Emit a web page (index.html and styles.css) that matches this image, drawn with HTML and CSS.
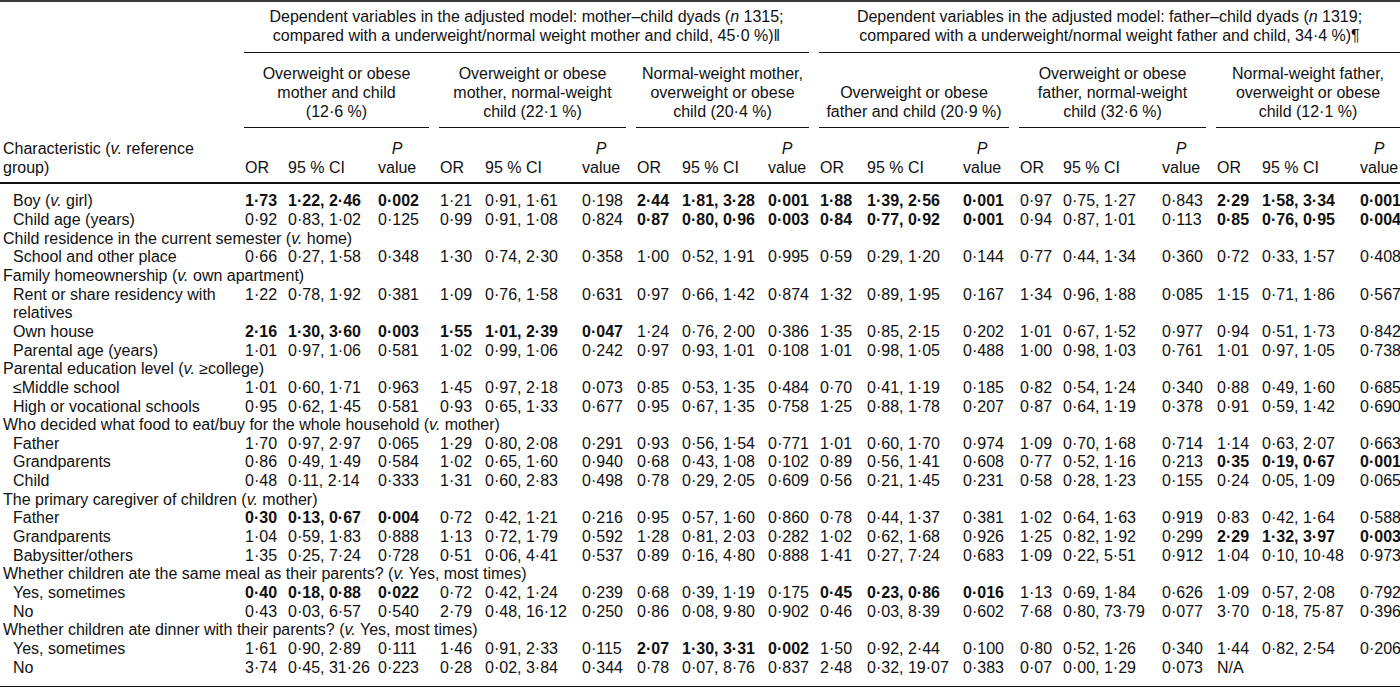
FILE: index.html
```html
<!DOCTYPE html>
<html>
<head>
<meta charset="utf-8">
<link rel="stylesheet" href="styles.css">
</head>
<body>
<table class="t">
<colgroup>
<col style="width:242px">
<col style="width:43px"><col style="width:90px"><col style="width:62px">
<col style="width:45px"><col style="width:97px"><col style="width:55px">
<col style="width:45px"><col style="width:86px"><col style="width:52px">
<col style="width:47px"><col style="width:96px"><col style="width:57px">
<col style="width:43px"><col style="width:99px"><col style="width:55px">
<col style="width:45px"><col style="width:98px"><col style="width:43px">
</colgroup>
<thead>
<tr class="h1">
<th></th>
<th colspan="9"><div class="rule">Dependent variables in the adjusted model: mother–child dyads (<i>n</i> 1315;<br>compared with a underweight/normal weight mother and child, 45·0 %)‖</div></th>
<th colspan="9"><div class="rule last">Dependent variables in the adjusted model: father–child dyads (<i>n</i> 1319;<br>compared with a underweight/normal weight father and child, 34·4 %)¶</div></th>
</tr>
<tr class="h2">
<th></th>
<th colspan="3"><div class="rule">Overweight or obese<br>mother and child<br>(12·6 %)</div></th>
<th colspan="3"><div class="rule">Overweight or obese<br>mother, normal-weight<br>child (22·1 %)</div></th>
<th colspan="3"><div class="rule">Normal-weight mother,<br>overweight or obese<br>child (20·4 %)</div></th>
<th colspan="3"><div class="rule">Overweight or obese<br>father and child (20·9 %)</div></th>
<th colspan="3"><div class="rule">Overweight or obese<br>father, normal-weight<br>child (32·6 %)</div></th>
<th colspan="3"><div class="rule last">Normal-weight father,<br>overweight or obese<br>child (12·1 %)</div></th>
</tr>
<tr class="h3">
<th class="lbl">Characteristic (<i>v.</i> reference<br>group)</th>
<th>OR</th><th>95 % CI</th><th><span class="pv"><i>P</i><br>value</span></th>
<th>OR</th><th>95 % CI</th><th><span class="pv"><i>P</i><br>value</span></th>
<th>OR</th><th>95 % CI</th><th><span class="pv"><i>P</i><br>value</span></th>
<th>OR</th><th>95 % CI</th><th><span class="pv"><i>P</i><br>value</span></th>
<th>OR</th><th>95 % CI</th><th><span class="pv"><i>P</i><br>value</span></th>
<th>OR</th><th>95 % CI</th><th><span class="pv"><i>P</i><br>value</span></th>
</tr>
</thead>
<tbody>
<tr class="sub first"><td class="lbl">Boy (<i>v.</i> girl)</td>
<td class="b">1·73</td><td class="b">1·22, 2·46</td><td class="b">0·002</td>
<td>1·21</td><td>0·91, 1·61</td><td>0·198</td>
<td class="b">2·44</td><td class="b">1·81, 3·28</td><td class="b">0·001</td>
<td class="b">1·88</td><td class="b">1·39, 2·56</td><td class="b">0·001</td>
<td>0·97</td><td>0·75, 1·27</td><td>0·843</td>
<td class="b">2·29</td><td class="b">1·58, 3·34</td><td class="b">0·001</td></tr>
<tr class="sub"><td class="lbl">Child age (years)</td>
<td>0·92</td><td>0·83, 1·02</td><td>0·125</td>
<td>0·99</td><td>0·91, 1·08</td><td>0·824</td>
<td class="b">0·87</td><td class="b">0·80, 0·96</td><td class="b">0·003</td>
<td class="b">0·84</td><td class="b">0·77, 0·92</td><td class="b">0·001</td>
<td>0·94</td><td>0·87, 1·01</td><td>0·113</td>
<td class="b">0·85</td><td class="b">0·76, 0·95</td><td class="b">0·004</td></tr>
<tr class="grp"><td colspan="19">Child residence in the current semester (<i>v.</i> home)</td></tr>
<tr class="sub"><td class="lbl">School and other place</td>
<td>0·66</td><td>0·27, 1·58</td><td>0·348</td>
<td>1·30</td><td>0·74, 2·30</td><td>0·358</td>
<td>1·00</td><td>0·52, 1·91</td><td>0·995</td>
<td>0·59</td><td>0·29, 1·20</td><td>0·144</td>
<td>0·77</td><td>0·44, 1·34</td><td>0·360</td>
<td>0·72</td><td>0·33, 1·57</td><td>0·408</td></tr>
<tr class="grp"><td colspan="19">Family homeownership (<i>v.</i> own apartment)</td></tr>
<tr class="sub"><td class="lbl">Rent or share residency with relatives</td>
<td>1·22</td><td>0·78, 1·92</td><td>0·381</td>
<td>1·09</td><td>0·76, 1·58</td><td>0·631</td>
<td>0·97</td><td>0·66, 1·42</td><td>0·874</td>
<td>1·32</td><td>0·89, 1·95</td><td>0·167</td>
<td>1·34</td><td>0·96, 1·88</td><td>0·085</td>
<td>1·15</td><td>0·71, 1·86</td><td>0·567</td></tr>
<tr class="sub"><td class="lbl">Own house</td>
<td class="b">2·16</td><td class="b">1·30, 3·60</td><td class="b">0·003</td>
<td class="b">1·55</td><td class="b">1·01, 2·39</td><td class="b">0·047</td>
<td>1·24</td><td>0·76, 2·00</td><td>0·386</td>
<td>1·35</td><td>0·85, 2·15</td><td>0·202</td>
<td>1·01</td><td>0·67, 1·52</td><td>0·977</td>
<td>0·94</td><td>0·51, 1·73</td><td>0·842</td></tr>
<tr class="sub"><td class="lbl">Parental age (years)</td>
<td>1·01</td><td>0·97, 1·06</td><td>0·581</td>
<td>1·02</td><td>0·99, 1·06</td><td>0·242</td>
<td>0·97</td><td>0·93, 1·01</td><td>0·108</td>
<td>1·01</td><td>0·98, 1·05</td><td>0·488</td>
<td>1·00</td><td>0·98, 1·03</td><td>0·761</td>
<td>1·01</td><td>0·97, 1·05</td><td>0·738</td></tr>
<tr class="grp"><td colspan="19">Parental education level (<i>v.</i> ≥college)</td></tr>
<tr class="sub"><td class="lbl">≤Middle school</td>
<td>1·01</td><td>0·60, 1·71</td><td>0·963</td>
<td>1·45</td><td>0·97, 2·18</td><td>0·073</td>
<td>0·85</td><td>0·53, 1·35</td><td>0·484</td>
<td>0·70</td><td>0·41, 1·19</td><td>0·185</td>
<td>0·82</td><td>0·54, 1·24</td><td>0·340</td>
<td>0·88</td><td>0·49, 1·60</td><td>0·685</td></tr>
<tr class="sub"><td class="lbl">High or vocational schools</td>
<td>0·95</td><td>0·62, 1·45</td><td>0·581</td>
<td>0·93</td><td>0·65, 1·33</td><td>0·677</td>
<td>0·95</td><td>0·67, 1·35</td><td>0·758</td>
<td>1·25</td><td>0·88, 1·78</td><td>0·207</td>
<td>0·87</td><td>0·64, 1·19</td><td>0·378</td>
<td>0·91</td><td>0·59, 1·42</td><td>0·690</td></tr>
<tr class="grp"><td colspan="19">Who decided what food to eat/buy for the whole household (<i>v.</i> mother)</td></tr>
<tr class="sub"><td class="lbl">Father</td>
<td>1·70</td><td>0·97, 2·97</td><td>0·065</td>
<td>1·29</td><td>0·80, 2·08</td><td>0·291</td>
<td>0·93</td><td>0·56, 1·54</td><td>0·771</td>
<td>1·01</td><td>0·60, 1·70</td><td>0·974</td>
<td>1·09</td><td>0·70, 1·68</td><td>0·714</td>
<td>1·14</td><td>0·63, 2·07</td><td>0·663</td></tr>
<tr class="sub"><td class="lbl">Grandparents</td>
<td>0·86</td><td>0·49, 1·49</td><td>0·584</td>
<td>1·02</td><td>0·65, 1·60</td><td>0·940</td>
<td>0·68</td><td>0·43, 1·08</td><td>0·102</td>
<td>0·89</td><td>0·56, 1·41</td><td>0·608</td>
<td>0·77</td><td>0·52, 1·16</td><td>0·213</td>
<td class="b">0·35</td><td class="b">0·19, 0·67</td><td class="b">0·001</td></tr>
<tr class="sub"><td class="lbl">Child</td>
<td>0·48</td><td>0·11, 2·14</td><td>0·333</td>
<td>1·31</td><td>0·60, 2·83</td><td>0·498</td>
<td>0·78</td><td>0·29, 2·05</td><td>0·609</td>
<td>0·56</td><td>0·21, 1·45</td><td>0·231</td>
<td>0·58</td><td>0·28, 1·23</td><td>0·155</td>
<td>0·24</td><td>0·05, 1·09</td><td>0·065</td></tr>
<tr class="grp"><td colspan="19">The primary caregiver of children (<i>v.</i> mother)</td></tr>
<tr class="sub"><td class="lbl">Father</td>
<td class="b">0·30</td><td class="b">0·13, 0·67</td><td class="b">0·004</td>
<td>0·72</td><td>0·42, 1·21</td><td>0·216</td>
<td>0·95</td><td>0·57, 1·60</td><td>0·860</td>
<td>0·78</td><td>0·44, 1·37</td><td>0·381</td>
<td>1·02</td><td>0·64, 1·63</td><td>0·919</td>
<td>0·83</td><td>0·42, 1·64</td><td>0·588</td></tr>
<tr class="sub"><td class="lbl">Grandparents</td>
<td>1·04</td><td>0·59, 1·83</td><td>0·888</td>
<td>1·13</td><td>0·72, 1·79</td><td>0·592</td>
<td>1·28</td><td>0·81, 2·03</td><td>0·282</td>
<td>1·02</td><td>0·62, 1·68</td><td>0·926</td>
<td>1·25</td><td>0·82, 1·92</td><td>0·299</td>
<td class="b">2·29</td><td class="b">1·32, 3·97</td><td class="b">0·003</td></tr>
<tr class="sub"><td class="lbl">Babysitter/others</td>
<td>1·35</td><td>0·25, 7·24</td><td>0·728</td>
<td>0·51</td><td>0·06, 4·41</td><td>0·537</td>
<td>0·89</td><td>0·16, 4·80</td><td>0·888</td>
<td>1·41</td><td>0·27, 7·24</td><td>0·683</td>
<td>1·09</td><td>0·22, 5·51</td><td>0·912</td>
<td>1·04</td><td>0·10, 10·48</td><td>0·973</td></tr>
<tr class="grp"><td colspan="19">Whether children ate the same meal as their parents? (<i>v.</i> Yes, most times)</td></tr>
<tr class="sub"><td class="lbl">Yes, sometimes</td>
<td class="b">0·40</td><td class="b">0·18, 0·88</td><td class="b">0·022</td>
<td>0·72</td><td>0·42, 1·24</td><td>0·239</td>
<td>0·68</td><td>0·39, 1·19</td><td>0·175</td>
<td class="b">0·45</td><td class="b">0·23, 0·86</td><td class="b">0·016</td>
<td>1·13</td><td>0·69, 1·84</td><td>0·626</td>
<td>1·09</td><td>0·57, 2·08</td><td>0·792</td></tr>
<tr class="sub"><td class="lbl">No</td>
<td>0·43</td><td>0·03, 6·57</td><td>0·540</td>
<td>2·79</td><td>0·48, 16·12</td><td>0·250</td>
<td>0·86</td><td>0·08, 9·80</td><td>0·902</td>
<td>0·46</td><td>0·03, 8·39</td><td>0·602</td>
<td>7·68</td><td>0·80, 73·79</td><td>0·077</td>
<td>3·70</td><td>0·18, 75·87</td><td>0·396</td></tr>
<tr class="grp"><td colspan="19">Whether children ate dinner with their parents? (<i>v.</i> Yes, most times)</td></tr>
<tr class="sub"><td class="lbl">Yes, sometimes</td>
<td>1·61</td><td>0·90, 2·89</td><td>0·111</td>
<td>1·46</td><td>0·91, 2·33</td><td>0·115</td>
<td class="b">2·07</td><td class="b">1·30, 3·31</td><td class="b">0·002</td>
<td>1·50</td><td>0·92, 2·44</td><td>0·100</td>
<td>0·80</td><td>0·52, 1·26</td><td>0·340</td>
<td>1·44</td><td>0·82, 2·54</td><td>0·206</td></tr>
<tr class="sub last-row"><td class="lbl">No</td>
<td>3·74</td><td>0·45, 31·26</td><td>0·223</td>
<td>0·28</td><td>0·02, 3·84</td><td>0·344</td>
<td>0·78</td><td>0·07, 8·76</td><td>0·837</td>
<td>2·48</td><td>0·32, 19·07</td><td>0·383</td>
<td>0·07</td><td>0·00, 1·29</td><td>0·073</td>
<td colspan="3">N/A</td></tr>
</tbody>
</table>
</body>
</html>
```

FILE: styles.css
```css
html, body {
  margin: 0;
  padding: 0;
  background: #ffffff;
  overflow: hidden;
}

body {
  font-family: "Liberation Sans", Arial, sans-serif;
  font-size: 16px;
  color: #111111;
}

.t {
  width: 1400px;
  table-layout: fixed;
  border-collapse: collapse;
  border-top: 2px solid #3a3a3a;
  border-bottom: 1px solid #111111;
}

.t th,
.t td {
  padding: 0 0 0 3px;
  line-height: 18.64px;
  font-weight: normal;
  text-align: left;
  vertical-align: top;
  white-space: nowrap;
}

.t i {
  font-style: italic;
}

/* header row 1 */
.t .h1 th {
  padding: 6px 0 0 0;
  text-align: center;
  vertical-align: bottom;
}

.rule {
  margin: 0 8px 0 2px;
  border-bottom: 1px solid #111111;
}

.rule.last {
  margin-right: 0;
}

.h1 .rule {
  padding-bottom: 7px;
}

/* header row 2 */
.t .h2 th {
  padding: 12px 0 0 0;
  text-align: center;
  vertical-align: bottom;
}

.h2 .rule {
  padding-bottom: 6px;
}

/* header row 3 */
.t .h3 th {
  padding-top: 12px;
  padding-bottom: 5px;
  vertical-align: bottom;
  border-bottom: 2px solid #111111;
}

.t .h3 th.lbl {
  white-space: nowrap;
  padding-right: 6px;
}

.pv {
  display: inline-block;
  text-align: center;
}

/* body */
.t td.lbl {
  white-space: normal;
  padding-right: 6px;
}

.t .sub td.lbl {
  padding-left: 13px;
}

.t .grp td {
  padding-left: 3px;
}

.t .first td {
  padding-top: 8px;
}

.t .last-row td {
  padding-bottom: 9px;
}

.t td.b {
  font-weight: bold;
}
```
